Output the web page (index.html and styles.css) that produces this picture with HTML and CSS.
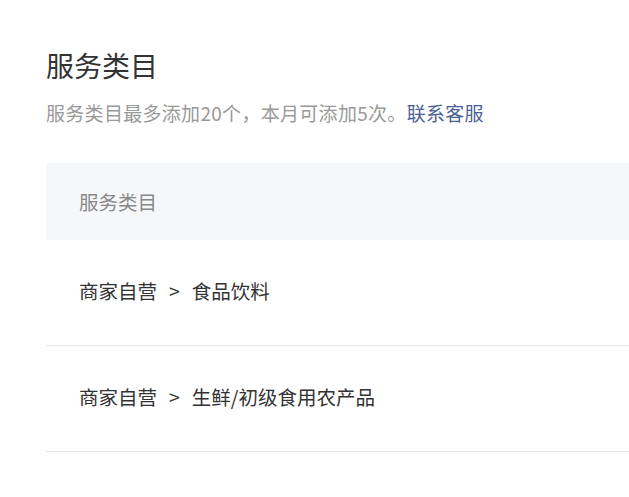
FILE: index.html
```html
<!DOCTYPE html>
<html lang="zh-CN">
<head>
<meta charset="utf-8">
<title>服务类目</title>
<link rel="stylesheet" href="styles.css">
</head>
<body>
<div class="page">
  <h1 class="title">服务类目</h1>
  <p class="hint">服务类目最多添加20个，本月可添加5次。<a class="link" href="#">联系客服</a></p>
  <div class="table">
    <div class="thead">服务类目</div>
    <div class="row">商家自营<span class="sep">&gt;</span>食品饮料</div>
    <div class="row">商家自营<span class="sep">&gt;</span>生鲜/初级食用农产品</div>
  </div>
</div>
</body>
</html>
```
FILE: styles.css
```css
html, body {
  margin: 0;
  padding: 0;
  background: #fff;
  overflow: hidden;
}
body {
  font-family: "Noto Sans CJK SC", "Noto Sans", sans-serif;
  color: #333;
}
.page {
  padding: 47px 0 0 46px;
}
.title {
  margin: 0;
  font-size: 28px;
  line-height: 36px;
  font-weight: 400;
  color: #333;
}
.hint {
  margin: 16px 0 0;
  font-size: 19px;
  line-height: 28px;
  letter-spacing: 0.3px;
  color: #999;
}
.link {
  color: #4a6196;
  text-decoration: none;
}
.table {
  margin-top: 36px;
}
.thead {
  height: 77px;
  line-height: 77px;
  padding-left: 33px;
  background: #f6f7f9;
  font-size: 19.5px;
  color: #888;
}
.row {
  height: 105px;
  line-height: 102px;
  padding-left: 33px;
  border-bottom: 1px solid #e6e6e6;
  font-size: 19.5px;
  color: #333;
}
.sep {
  margin: 0 12px;
}
```
